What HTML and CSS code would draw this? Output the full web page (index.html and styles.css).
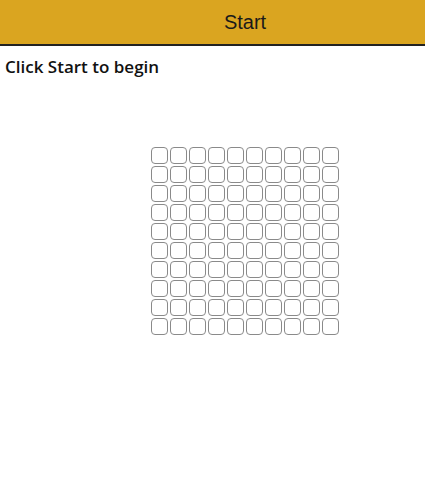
FILE: index.html
```html
<!DOCTYPE html>
<html>
<head>
<meta charset="utf-8">
<link rel="stylesheet" href="styles.css">
</head>
<body>
<div class="header">Start</div>
<div class="status">Click Start to begin</div>
<div class="grid" id="grid">
<span></span><span></span><span></span><span></span><span></span><span></span><span></span><span></span><span></span><span></span>
<span></span><span></span><span></span><span></span><span></span><span></span><span></span><span></span><span></span><span></span>
<span></span><span></span><span></span><span></span><span></span><span></span><span></span><span></span><span></span><span></span>
<span></span><span></span><span></span><span></span><span></span><span></span><span></span><span></span><span></span><span></span>
<span></span><span></span><span></span><span></span><span></span><span></span><span></span><span></span><span></span><span></span>
<span></span><span></span><span></span><span></span><span></span><span></span><span></span><span></span><span></span><span></span>
<span></span><span></span><span></span><span></span><span></span><span></span><span></span><span></span><span></span><span></span>
<span></span><span></span><span></span><span></span><span></span><span></span><span></span><span></span><span></span><span></span>
<span></span><span></span><span></span><span></span><span></span><span></span><span></span><span></span><span></span><span></span>
<span></span><span></span><span></span><span></span><span></span><span></span><span></span><span></span><span></span><span></span>
</div>
</body>
</html>
```
FILE: styles.css
```css
html, body {
  margin: 0;
  padding: 0;
  background: #fff;
}
body {
  width: 425px;
  overflow: hidden;
}
.header {
  height: 44px;
  background: #daa520;
  border-bottom: 2px solid #222;
  box-sizing: content-box;
  display: flex;
  align-items: center;
  justify-content: center;
  padding-left: 65px;
  font-family: "Liberation Sans", Arial, sans-serif;
  font-size: 20px;
  color: #1a1a1a;
}
.status {
  margin-top: 10px;
  padding-left: 5px;
  font-family: "Open Sans", sans-serif;
  font-weight: 600;
  font-size: 17px;
  line-height: 22px;
  color: #111;
}
.grid {
  margin-top: 69px;
  margin-left: 151px;
  display: grid;
  grid-template-columns: repeat(10, 17px);
  grid-auto-rows: 17px;
  gap: 2px;
}
.grid span {
  box-sizing: border-box;
  border: 1px solid #8a8a8a;
  border-radius: 4px;
  background: #fff;
}
```
